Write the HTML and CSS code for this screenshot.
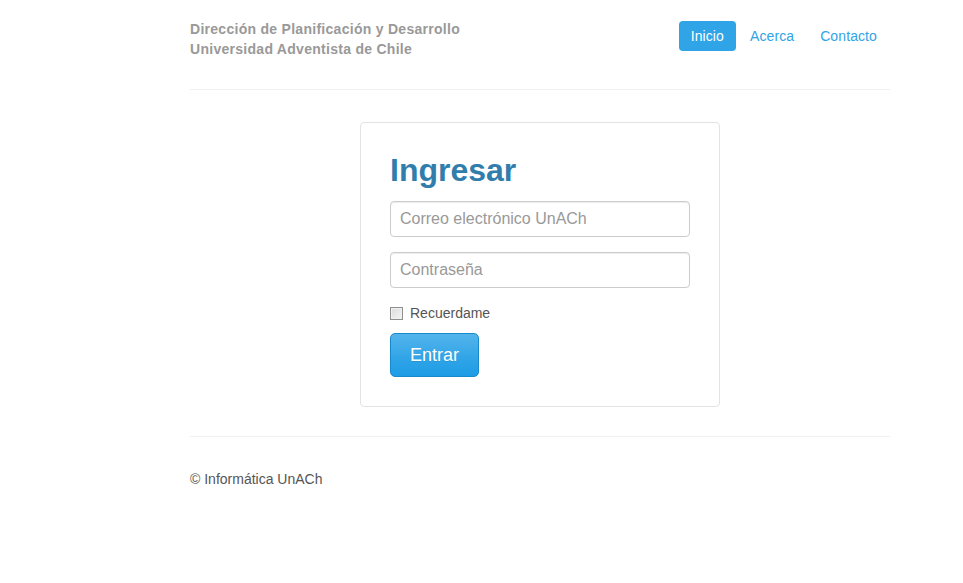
FILE: index.html
```html
<!DOCTYPE html>
<html lang="es">
<head>
<meta charset="utf-8">
<title>Ingresar</title>
<link rel="stylesheet" href="styles.css">
</head>
<body>
<div class="container">
  <header class="header">
    <div class="brand">Dirección de Planificación y Desarrollo<br>Universidad Adventista de Chile</div>
    <nav class="nav">
      <a class="pill active" href="#">Inicio</a>
      <a class="pill" href="#">Acerca</a>
      <a class="pill" href="#">Contacto</a>
    </nav>
  </header>
  <main class="main">
    <form class="card">
      <h2 class="title">Ingresar</h2>
      <input class="field" type="email" placeholder="Correo electrónico UnACh">
      <input class="field" type="password" placeholder="Contraseña">
      <label class="check"><input type="checkbox"> Recuerdame</label>
      <button class="btn" type="button">Entrar</button>
    </form>
  </main>
  <footer class="footer">© Informática UnACh</footer>
</div>
</body>
</html>
```
FILE: styles.css
```css
* { box-sizing: border-box; }
html, body { margin: 0; background: #fff; }
body {
  font-family: "Liberation Sans", Arial, sans-serif;
  font-size: 14px;
  line-height: 20px;
  color: #555;
}
.container {
  width: 700px;
  margin-left: 190px;
}
.header {
  display: flex;
  justify-content: space-between;
  align-items: flex-start;
  padding: 19px 0 30px;
  border-bottom: 1px solid #f1f1f1;
}
.brand {
  font-weight: bold;
  color: #999;
  font-size: 14px;
  line-height: 20px;
  letter-spacing: 0.28px;
}
.nav {
  display: flex;
  gap: 2px;
  padding-top: 2px;
  margin-right: 1px;
}
.pill {
  display: block;
  padding: 5px 12px;
  line-height: 20px;
  border-radius: 4px;
  color: #2fa4e7;
  text-decoration: none;
  letter-spacing: 0.1px;
}
.pill.active {
  background: #2fa4e7;
  color: #fff;
}
.main {
  display: flex;
  justify-content: center;
  padding: 32px 0 29px;
  border-bottom: 1px solid #f1f1f1;
}
.card {
  width: 360px;
  border: 1px solid #e3e3e3;
  border-radius: 4px;
  padding: 30px 29px 29px;
  display: flex;
  flex-direction: column;
  align-items: flex-start;
}
.title {
  margin: 0 0 13px;
  font-size: 32px;
  line-height: 35px;
  font-weight: bold;
  color: #317eac;
}
.field {
  width: 300px;
  height: 36px;
  padding: 6px 9px;
  font-family: inherit;
  font-size: 16px;
  color: #555;
  border: 1px solid #ccc;
  border-radius: 4px;
  margin: 0 0 15px;
  box-shadow: inset 0 1px 1px rgba(0,0,0,0.075);
}
.field::placeholder { color: #999; }
.check {
  display: flex;
  align-items: center;
  gap: 7px;
  margin: 0 0 10px;
  font-size: 14px;
  line-height: 20px;
  color: #555;
}
.check input {
  -webkit-appearance: none;
  appearance: none;
  margin: 0;
  width: 13px;
  height: 13px;
  border: 1px solid #8e8f8f;
  border-radius: 0;
  background: linear-gradient(135deg, #dcdcdc, #f4f4f4);
  box-shadow: inset 0 0 0 1px #f0f0f0;
}
.btn {
  width: 89px;
  height: 44px;
  font-family: inherit;
  font-size: 18px;
  color: #fff;
  border: 1px solid #178acc;
  border-radius: 5px;
  background: linear-gradient(#54b4eb, #2fa4e7 60%, #1d9ce5);
  text-shadow: 0 1px 0 rgba(0,0,0,0.1);
  cursor: pointer;
}
.footer {
  padding-top: 32px;
  line-height: 20px;
  color: #555;
}
```
